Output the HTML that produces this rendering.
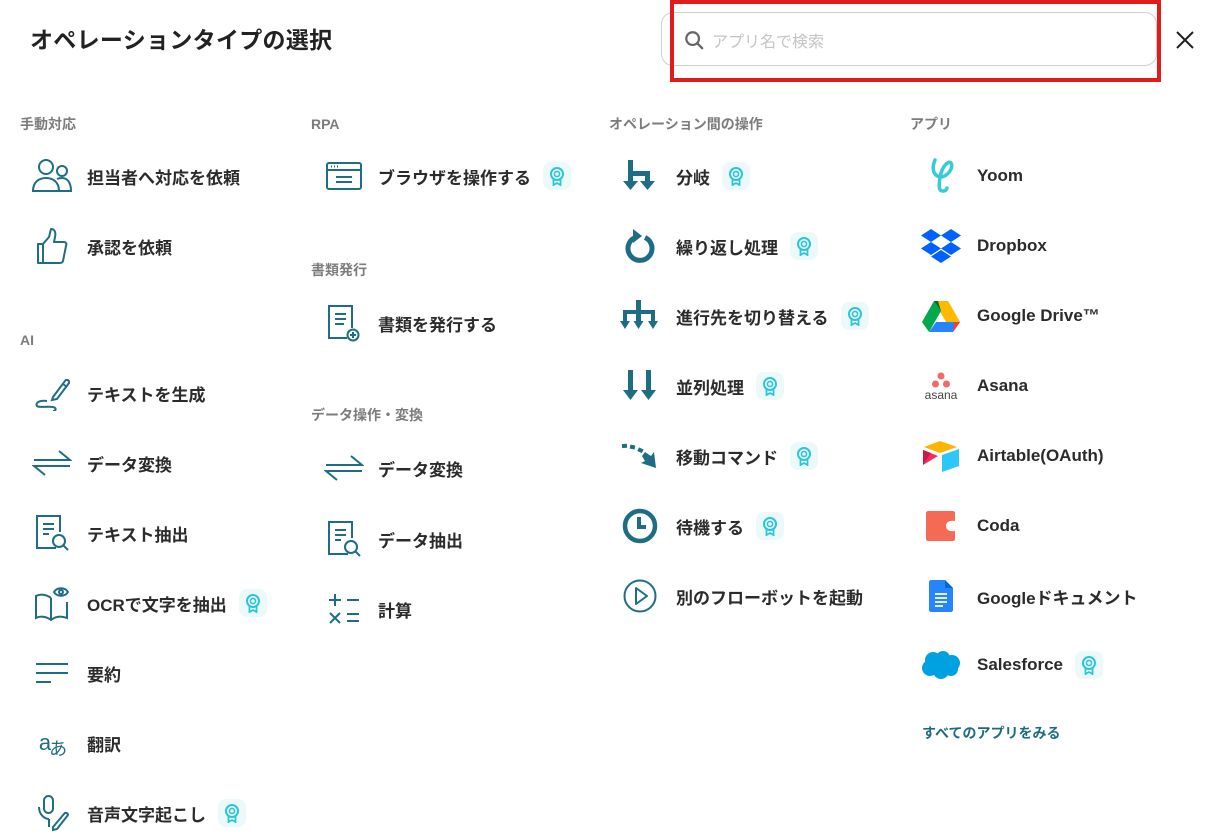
<!DOCTYPE html>
<html><head><meta charset="utf-8"><style>
*{margin:0;padding:0;box-sizing:border-box}
body{width:1210px;height:837px;background:#fff;position:relative;overflow:hidden;font-family:"Liberation Sans","Noto Sans CJK JP",sans-serif;color:#2b2b2b}
.t{position:absolute;left:30px;top:21px;font-size:23px;font-weight:700;letter-spacing:0.3px;color:#222}
.h{position:absolute;font-size:14px;font-weight:700;color:#7c7c7c;line-height:20px}
.i{position:absolute;height:40px;display:flex;align-items:center;font-size:17px;font-weight:600;white-space:nowrap;margin-top:-2px}
.i .ic{width:40px;height:40px;position:absolute;display:flex;align-items:center;justify-content:center}
.i svg{display:block}
.b{display:inline-flex;width:28px;height:28px;border-radius:8px;background:#ecf9fa;margin-left:12px;align-items:center;justify-content:center}
.s{position:absolute;left:661px;top:12px;width:496px;height:54px;border:1px solid #cfcfcf;border-radius:12px}
.r{position:absolute;left:670px;top:0;width:491px;height:82px;border:4px solid #e31b1b}
.ph{position:absolute;left:712px;top:28px;font-size:16px;color:#c4c4c4}
.lk{position:absolute;left:922px;top:723px;font-size:14px;font-weight:700;color:#1d6b80}
</style></head><body>
<div class="t">オペレーションタイプの選択</div>
<div class="s"></div>
<svg style="position:absolute;left:684px;top:30px" width="20" height="20" viewBox="0 0 22 22"><circle cx="9.5" cy="9.5" r="7" fill="none" stroke="#666" stroke-width="2.4"/><path d="M14.5 14.5 L20 20" stroke="#666" stroke-width="2.6" stroke-linecap="round"/></svg>
<div class="ph">アプリ名で検索</div>
<div class="r"></div>
<svg style="position:absolute;left:1175px;top:30px" width="20" height="20" viewBox="0 0 20 20"><path d="M2 2L18 18M18 2L2 18" stroke="#222" stroke-width="2"/></svg>

<svg width="0" height="0" style="position:absolute"><defs>
<symbol id="bd" viewBox="0 0 20 20"><circle cx="10" cy="8" r="6" fill="none" stroke="#2cc5d8" stroke-width="2"/><circle cx="10" cy="8" r="2.6" fill="none" stroke="#2cc5d8" stroke-width="1.6"/><path d="M6.5 13 V19 L10 17 L13.5 19 V13" fill="none" stroke="#2cc5d8" stroke-width="1.8"/></symbol>
</defs></svg>

<div class="h" style="left:20px;top:114px">手動対応</div>
<div class="h" style="left:20px;top:330px">AI</div>
<div class="h" style="left:311px;top:114px">RPA</div>
<div class="h" style="left:311px;top:260px">書類発行</div>
<div class="h" style="left:311px;top:405px">データ操作・変換</div>
<div class="h" style="left:609px;top:114px">オペレーション間の操作</div>
<div class="h" style="left:910px;top:114px">アプリ</div>

<!-- column 1 -->
<div class="i" style="left:87px;top:158px"><span class="ic" style="left:-55px"><svg width="40" height="36" viewBox="0 0 40 36" fill="none" stroke="#1d6e85" stroke-width="2"><circle cx="14" cy="9" r="7"/><path d="M1 33 C1 24 7 20 14 20 C21 20 27 24 27 33 Z"/><circle cx="30" cy="13" r="5"/><path d="M25 21 C27 20 28 20 30 20 C35 20 39 24 39 33 H27"/></svg></span>担当者へ対応を依頼</div>
<div class="i" style="left:87px;top:228px"><span class="ic" style="left:-55px"><svg width="34" height="38" viewBox="0 0 34 38" fill="none" stroke="#1d6e85" stroke-width="2" stroke-linejoin="round"><path d="M3 17 H8 V36 H3 Z"/><path d="M8 17 L14 10 L16 2 C20 2 21 6 20 10 L19 15 H29 C31 15 32 17 31 19 L28 34 C27 36 26 36 24 36 H8"/></svg></span>承認を依頼</div>
<div class="i" style="left:87px;top:375px"><span class="ic" style="left:-55px"><svg width="38" height="36" viewBox="0 0 38 36" fill="none" stroke="#1d6e85" stroke-width="2"><path d="M20 22 L32 6 C33 4 36 5 36 7 L36 8 L24 24 L19 25 Z"/><path d="M30 9 L34 12"/><path d="M14 26 C6 25 2 28 4 31 C6 33 14 31 20 32 C24 33 23 36 20 36"/></svg></span>テキストを生成</div>
<div class="i" style="left:87px;top:445px"><span class="ic" style="left:-55px"><svg width="40" height="28" viewBox="0 0 40 28" fill="none" stroke="#1d6e85" stroke-width="2"><path d="M2 11 H38 L27 2"/><path d="M38 17 H2 L13 26"/></svg></span>データ変換</div>
<div class="i" style="left:87px;top:515px"><span class="ic" style="left:-55px"><svg width="36" height="38" viewBox="0 0 36 38" fill="none" stroke="#1d6e85" stroke-width="2"><path d="M22 34 H3 V2 H26 V18"/><path d="M9 10 H20 M9 15 H20 M9 20 H15"/><circle cx="25" cy="27" r="6"/><path d="M29 31 L34 36"/></svg></span>テキスト抽出</div>
<div class="i" style="left:87px;top:585px"><span class="ic" style="left:-55px"><svg width="36" height="38" viewBox="0 0 36 38" fill="none" stroke="#1d6e85" stroke-width="2"><path d="M17 14 C12 10 6 10 2 12 V34 C6 32 12 32 17 36 C22 32 28 32 33 34 V18"/><path d="M17 14 V36"/><path d="M20 8 C23 3 31 3 34 8 C31 13 23 13 20 8 Z"/><circle cx="27" cy="8" r="2"/></svg></span>OCRで文字を抽出<span class="b"><svg width="20" height="20"><use href="#bd"/></svg></span></div>
<div class="i" style="left:87px;top:655px"><span class="ic" style="left:-55px"><svg width="36" height="22" viewBox="0 0 36 22" stroke="#1d6e85" stroke-width="2"><path d="M2 2 H34 M2 11 H34 M2 20 H17"/></svg></span>要約</div>
<div class="i" style="left:87px;top:725px"><span class="ic" style="left:-55px;font-size:22px;color:#1d6e85;font-weight:400;letter-spacing:-2px">a<span style="font-size:18px;position:relative;top:5px">あ</span></span>翻訳</div>
<div class="i" style="left:87px;top:795px"><span class="ic" style="left:-55px"><svg width="36" height="38" viewBox="0 0 36 38" fill="none" stroke="#1d6e85" stroke-width="2"><rect x="10" y="2" width="9" height="17" rx="4.5"/><path d="M5 13 C5 22 12 25 15 25 M15 25 V33"/><path d="M19 33 L30 20 C31 18 34 19 34 21 L23 35 L19 36 Z"/></svg></span>音声文字起こし<span class="b"><svg width="20" height="20"><use href="#bd"/></svg></span></div>

<!-- column 2 -->
<div class="i" style="left:378px;top:158px"><span class="ic" style="left:-54px"><svg width="36" height="28" viewBox="0 0 36 28" fill="none" stroke="#1d6e85" stroke-width="2"><rect x="1" y="1" width="34" height="26" rx="2"/><path d="M1 8 H35"/><path d="M5 4.5 H6 M8 4.5 H9 M11 4.5 H12"/><path d="M10 15 H26 M10 20 H26"/></svg></span>ブラウザを操作する<span class="b"><svg width="20" height="20"><use href="#bd"/></svg></span></div>
<div class="i" style="left:378px;top:305px"><span class="ic" style="left:-54px"><svg width="36" height="38" viewBox="0 0 36 38" fill="none" stroke="#1d6e85" stroke-width="2"><path d="M21 34 H3 V2 H26 V24"/><path d="M9 10 H20 M9 15 H20 M9 20 H18"/><circle cx="27" cy="31" r="5.5"/><path d="M27 28 V34 M24 31 H30"/></svg></span>書類を発行する</div>
<div class="i" style="left:378px;top:450px"><span class="ic" style="left:-54px"><svg width="40" height="28" viewBox="0 0 40 28" fill="none" stroke="#1d6e85" stroke-width="2"><path d="M2 11 H38 L27 2"/><path d="M38 17 H2 L13 26"/></svg></span>データ変換</div>
<div class="i" style="left:378px;top:521px"><span class="ic" style="left:-54px"><svg width="36" height="38" viewBox="0 0 36 38" fill="none" stroke="#1d6e85" stroke-width="2"><path d="M22 34 H3 V2 H26 V18"/><path d="M9 10 H20 M9 15 H20 M9 20 H15"/><circle cx="25" cy="27" r="6"/><path d="M29 31 L34 36"/></svg></span>データ抽出</div>
<div class="i" style="left:378px;top:591px"><span class="ic" style="left:-54px"><svg width="34" height="34" viewBox="0 0 34 34" fill="none" stroke="#1d6e85" stroke-width="2"><path d="M2 8 H14 M8 2 V14 M20 8 H32 M3 21 L13 31 M13 21 L3 31 M20 22 H32 M20 29 H32"/></svg></span>計算</div>

<!-- column 3 -->
<div class="i" style="left:676px;top:158px"><span class="ic" style="left:-56px"><svg width="34" height="34" viewBox="0 0 34 34" fill="#1d6e85"><rect x="5" y="1" width="5" height="24"/><rect x="5" y="12" width="22" height="5"/><rect x="22" y="12" width="5" height="13"/><path d="M0 22 H15 L7.5 31 Z M17 22 H32 L24.5 31 Z"/></svg></span>分岐<span class="b"><svg width="20" height="20"><use href="#bd"/></svg></span></div>
<div class="i" style="left:676px;top:228px"><span class="ic" style="left:-56px"><svg width="34" height="36" viewBox="0 0 34 36" fill="none"><path d="M12 9.5 A12 12 0 1 0 22 9.5" stroke="#1d6e85" stroke-width="5"/><path d="M10 1 L19 8 L10 15 Z" fill="#1d6e85"/></svg></span>繰り返し処理<span class="b"><svg width="20" height="20"><use href="#bd"/></svg></span></div>
<div class="i" style="left:676px;top:298px"><span class="ic" style="left:-57px"><svg width="38" height="34" viewBox="0 0 38 34" fill="#1d6e85"><rect x="16" y="1" width="5" height="24"/><rect x="3" y="11" width="32" height="4"/><rect x="3" y="11" width="4" height="14"/><rect x="31" y="11" width="4" height="14"/><path d="M0 22 H10 L5 30 Z M13.5 22 H23.5 L18.5 30 Z M28 22 H38 L33 30 Z"/></svg></span>進行先を切り替える<span class="b"><svg width="20" height="20"><use href="#bd"/></svg></span></div>
<div class="i" style="left:676px;top:368px"><span class="ic" style="left:-56px"><svg width="34" height="34" viewBox="0 0 34 34" fill="#1d6e85"><rect x="5" y="1" width="5" height="24"/><rect x="23" y="1" width="5" height="24"/><path d="M0 21 H15 L7.5 31 Z M18 21 H33 L25.5 31 Z"/></svg></span>並列処理<span class="b"><svg width="20" height="20"><use href="#bd"/></svg></span></div>
<div class="i" style="left:676px;top:438px"><span class="ic" style="left:-56px"><svg width="38" height="30" viewBox="0 0 38 30" fill="#1d6e85"><rect x="1" y="3" width="5" height="4" transform="rotate(-5 3 5)"/><rect x="9" y="4" width="5" height="4" transform="rotate(10 11 6)"/><rect x="17" y="7" width="5" height="4" transform="rotate(25 19 9)"/><path d="M24 11 L30 15 L33 11 L35 27 L20 22 L24 20 L21 15 Z"/></svg></span>移動コマンド<span class="b"><svg width="20" height="20"><use href="#bd"/></svg></span></div>
<div class="i" style="left:676px;top:508px"><span class="ic" style="left:-56px"><svg width="36" height="36" viewBox="0 0 36 36" fill="none" stroke="#1d6e85"><circle cx="18" cy="18" r="15" stroke-width="4.5"/><path d="M17 9 V19 H24" stroke-width="4"/></svg></span>待機する<span class="b"><svg width="20" height="20"><use href="#bd"/></svg></span></div>
<div class="i" style="left:676px;top:578px"><span class="ic" style="left:-56px"><svg width="36" height="36" viewBox="0 0 36 36" fill="none" stroke="#1d6e85" stroke-width="2"><circle cx="18" cy="18" r="15.5"/><path d="M14 10 L25 18 L14 26 Z" stroke-linejoin="round"/></svg></span>別のフローボットを起動</div>

<!-- column 4 -->
<div class="i" style="left:977px;top:158px"><span class="ic" style="left:-56px"><svg width="30" height="38" viewBox="0 0 30 38" fill="none" stroke="#36ccd4" stroke-width="3.5" stroke-linecap="round"><path d="M9 3 C6 10 6 18 14 20 C22 20 28 10 25 6 C22 3 16 10 14 20 C13 28 12 34 17 34 C20 34 21 32 21 31"/></svg></span>Yoom</div>
<div class="i" style="left:977px;top:228px"><span class="ic" style="left:-56px"><svg width="40" height="38" viewBox="0 0 40 38" fill="#0061fe"><path d="M10 2 L20 8.5 L10 15 L0 8.5 Z M30 2 L40 8.5 L30 15 L20 8.5 Z M10 15 L20 21.5 L10 28 L0 21.5 Z M30 15 L40 21.5 L30 28 L20 21.5 Z M20 23 L30 29.5 L20 36 L10 29.5 Z"/></svg></span>Dropbox</div>
<div class="i" style="left:977px;top:298px"><span class="ic" style="left:-56px"><svg width="38" height="34" viewBox="0 0 38 34"><path d="M12 2 H26 L38 23 H24 Z" fill="#ffba00"/><path d="M12 2 L0 23 L7 33 L19 12 Z" fill="#00a94b"/><path d="M7 33 H31 L38 23 H14 Z" fill="#2684fc"/><path d="M26 2 L38 23 H31 Z" fill="#ffba00"/><path d="M31 33 L38 23 H32 Z" fill="#ea4335"/><path d="M12 2 L19 12 L16 2 Z" fill="#006b2d"/></svg></span>Google Drive™</div>
<div class="i" style="left:977px;top:368px"><span class="ic" style="left:-56px;flex-direction:column"><svg width="24" height="16" viewBox="0 0 24 16" fill="#f06a6a"><circle cx="12" cy="4" r="3.5"/><circle cx="6.5" cy="12" r="3.5"/><circle cx="17.5" cy="12" r="3.5"/></svg><span style="font-size:12px;font-weight:400;color:#444;line-height:12px;margin-top:1px">asana</span></span>Asana</div>
<div class="i" style="left:977px;top:438px"><span class="ic" style="left:-56px"><svg width="38" height="32" viewBox="0 0 38 32"><path d="M18 1 L35 7 L18 13 L2 7 Z" fill="#fcb400"/><path d="M20 15 L37 9 V26 L20 32 Z" fill="#2dc7f7"/><path d="M1 10 L16 16 L1 25 Z" fill="#f82b60"/><path d="M1 10 L9 13 L1 25 Z" fill="#c31e47"/></svg></span>Airtable(OAuth)</div>
<div class="i" style="left:977px;top:508px"><span class="ic" style="left:-56px"><svg width="32" height="32" viewBox="0 0 32 32"><path d="M3 1 H28 C29 1 30 2 30 3 V11 C25 10 21 12 21 16 C21 20 25 22 30 21 V29 C30 30 29 31 28 31 H3 C2 31 1 30 1 29 V3 C1 2 2 1 3 1 Z" fill="#f46a54"/></svg></span>Coda</div>
<div class="i" style="left:977px;top:578px"><span class="ic" style="left:-56px"><svg width="24" height="32" viewBox="0 0 24 32"><path d="M2 0 H16 L24 8 V30 C24 31 23 32 22 32 H2 C1 32 0 31 0 30 V2 C0 1 1 0 2 0 Z" fill="#2684fc"/><path d="M16 0 V8 H24 Z" fill="#0066da"/><path d="M6 14 H18 M6 18 H18 M6 22 H18 M6 26 H14" stroke="#fff" stroke-width="1.8"/></svg></span>Googleドキュメント</div>
<div class="i" style="left:977px;top:647px"><span class="ic" style="left:-56px"><svg width="40" height="30" viewBox="0 0 40 30" fill="#00a1e0"><circle cx="12" cy="10" r="8"/><circle cx="22" cy="8" r="7"/><circle cx="31" cy="13" r="8"/><circle cx="9" cy="18" r="8"/><circle cx="20" cy="21" r="8"/><circle cx="30" cy="19" r="7"/></svg></span>Salesforce<span class="b"><svg width="20" height="20"><use href="#bd"/></svg></span></div>
<div class="lk">すべてのアプリをみる</div>
</body></html>
